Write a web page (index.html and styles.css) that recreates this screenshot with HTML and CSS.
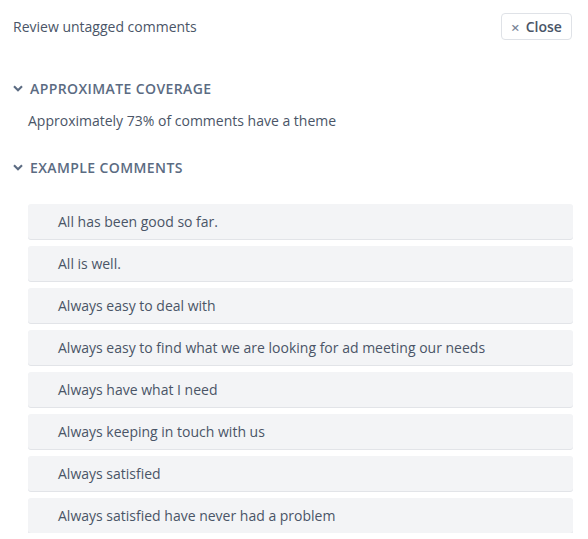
FILE: index.html
```html
<!DOCTYPE html>
<html>
<head>
<meta charset="utf-8">
<link rel="stylesheet" href="styles.css">
</head>
<body>
<div class="panel">
  <div class="topbar">
    <div class="title">Review untagged comments</div>
    <button class="close"><span class="x">×</span>Close</button>
  </div>
  <div class="section">
    <div class="sec-head">
      <svg class="chev" width="10" height="7" viewBox="0 0 10 7"><path d="M1 1.2 L5 5.2 L9 1.2" fill="none" stroke="#5b6b82" stroke-width="2.1"/></svg>
      <span>Approximate coverage</span>
    </div>
    <div class="coverage">Approximately 73% of comments have a theme</div>
  </div>
  <div class="section">
    <div class="sec-head">
      <svg class="chev" width="10" height="7" viewBox="0 0 10 7"><path d="M1 1.2 L5 5.2 L9 1.2" fill="none" stroke="#5b6b82" stroke-width="2.1"/></svg>
      <span>Example comments</span>
    </div>
    <ul class="comments">
      <li>All has been good so far.</li>
      <li>All is well.</li>
      <li>Always easy to deal with</li>
      <li>Always easy to find what we are looking for ad meeting our needs</li>
      <li>Always have what I need</li>
      <li>Always keeping in touch with us</li>
      <li>Always satisfied</li>
      <li>Always satisfied have never had a problem</li>
    </ul>
  </div>
</div>
</body>
</html>
```
FILE: styles.css
```css
html, body {
  margin: 0;
  padding: 0;
  background: #ffffff;
}
body {
  font-family: "Open Sans", "Noto Sans", sans-serif;
  color: #4a5567;
}
.panel {
  padding: 13px 15px 0 13px;
}
.topbar {
  display: flex;
  justify-content: space-between;
  align-items: center;
  height: 27px;
}
.title {
  font-size: 14px;
  color: #4a5567;
}
.close {
  box-sizing: border-box;
  height: 27px;
  width: 71px;
  border: 1px solid #dfe2e7;
  border-radius: 4px;
  background: #fff;
  font-family: "Open Sans", "Noto Sans", sans-serif;
  font-size: 14px;
  font-weight: 600;
  color: #4a5567;
  display: flex;
  align-items: center;
  justify-content: center;
  padding: 0;
  margin-right: 1px;
}
.close .x {
  font-size: 15px;
  color: #7a8597;
  margin-right: 6px;
  font-weight: 600;
}
.section {
  margin-top: 38px;
}
.section + .section {
  margin-top: 26px;
}
.sec-head {
  display: flex;
  align-items: center;
  height: 20px;
  font-size: 14px;
  font-weight: 600;
  text-transform: uppercase;
  letter-spacing: 0.4px;
  color: #5b6b82;
}
.chev {
  margin-right: 7px;
}
.coverage {
  margin-top: 13px;
  margin-left: 15px;
  font-size: 14px;
  line-height: 20px;
  color: #4a5567;
}
.comments {
  list-style: none;
  margin: 27px 0 0 15px;
  padding: 0;
  display: flex;
  flex-direction: column;
  gap: 7px;
}
.comments li {
  height: 35px;
  box-sizing: border-box;
  background: #f3f4f6;
  border-radius: 3px;
  box-shadow: 0 1px 0 #e2e4e8;
  padding-left: 30px;
  display: flex;
  align-items: center;
  font-size: 14px;
  color: #4a5567;
}
```
